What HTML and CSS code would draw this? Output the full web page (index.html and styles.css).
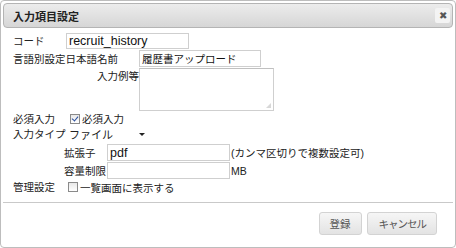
FILE: index.html
```html
<!DOCTYPE html>
<html lang="ja">
<head>
  <meta charset="UTF-8" />
  <title>入力項目設定</title>
  <link rel="stylesheet" href="styles.css">
</head>
<body>
  <div class="dialog">
    <div class="titlebar">
      <span class="title">入力項目設定</span>
      <span class="close">&#10006;</span>
    </div>
    <form class="content">
      <div class="row row-code">
        <label class="lbl lbl-code">コード</label>
        <div class="input input-code">recruit_history</div>
      </div>
      <div class="row row-name">
        <label class="lbl lbl-lang">言語別設定日本語名前</label>
        <div class="input input-name">履歴書アップロード</div>
      </div>
      <div class="row row-example">
        <label class="lbl lbl-example">入力例等</label>
        <div class="textarea"><span class="grip"></span></div>
      </div>
      <div class="row row-required">
        <label class="lbl lbl-main">必須入力</label>
        <span class="check checked"></span>
        <span class="check-text">必須入力</span>
      </div>
      <div class="row row-type">
        <label class="lbl lbl-main">入力タイプ</label>
        <div class="select">ファイル<span class="caret"></span></div>
      </div>
      <div class="row row-sub">
        <label class="lbl lbl-sub">拡張子</label>
        <div class="input input-sub">pdf</div>
        <span class="note">(カンマ区切りで複数設定可)</span>
      </div>
      <div class="row row-sub row-size">
        <label class="lbl lbl-sub">容量制限</label>
        <div class="input input-sub"></div>
        <span class="note">MB</span>
      </div>
      <div class="row row-admin">
        <label class="lbl lbl-main">管理設定</label>
        <span class="check"></span>
        <span class="check-text">一覧画面に表示する</span>
      </div>
    </form>
    <div class="buttonpane">
      <button type="button" class="btn">登録</button>
      <button type="button" class="btn btn-cancel">キャンセル</button>
    </div>
  </div>
</body>
</html>
```

FILE: styles.css
```css
body {
  margin: 0;
  background: #ffffff;
  font-family: "Liberation Sans", "Noto Sans CJK JP", sans-serif;
  font-size: 10.5px;
  color: #222;
}

.dialog {
  width: 456px;
  height: 248px;
  box-sizing: border-box;
  border: 1px solid #bdbdbd;
  border-radius: 4px;
  padding: 2px;
  display: flex;
  flex-direction: column;
  background: #fff;
}

.titlebar {
  height: 25px;
  box-sizing: border-box;
  border: 1px solid #b4b4b4;
  border-radius: 4px;
  background: linear-gradient(#ececec, #d6d6d6);
  display: flex;
  align-items: center;
  justify-content: space-between;
  padding: 0 2px 0 9px;
}

.title {
  font-weight: bold;
  font-size: 11px;
  color: #222;
}

.close {
  width: 15px;
  height: 15px;
  background: #f3f3f3;
  border-radius: 2px;
  color: #555;
  font-size: 10px;
  display: flex;
  align-items: center;
  justify-content: center;
}

.content {
  height: 174px;
  margin: 0;
  padding: 5px 0 0 10px;
  box-sizing: border-box;
}

.row {
  display: flex;
  align-items: center;
}

.lbl {
  line-height: 14px;
}

.input {
  box-sizing: border-box;
  border: 1px solid #cfcfcf;
  background: #fff;
  padding: 0 0 0 2px;
  display: flex;
  align-items: center;
}

.row-code {
  height: 16px;
}

.lbl-code {
  width: 53px;
}

.input-code {
  width: 123px;
  height: 16px;
  font-size: 12.5px;
  color: #111;
}

.row-name {
  height: 17px;
  margin-top: 1px;
}

.lbl-lang {
  width: 126px;
}

.input-name {
  width: 122px;
  height: 17px;
  color: #111;
}

.row-example {
  align-items: flex-start;
  margin-top: 1px;
}

.lbl-example {
  width: 126px;
  text-align: right;
  margin-top: 1px;
}

.textarea {
  position: relative;
  width: 135px;
  height: 43px;
  box-sizing: border-box;
  border: 1px solid #cfcfcf;
  border-top-color: #c0c0c0;
}

.grip {
  position: absolute;
  right: 2px;
  bottom: 2px;
  width: 5px;
  height: 5px;
  background: radial-gradient(circle, #aaa 0.6px, transparent 0.8px) 0 0 / 2px 2px;
  clip-path: polygon(100% 0, 100% 100%, 0 100%);
}

.row-required {
  height: 13px;
  margin-top: 1px;
}

.lbl-main {
  width: 57px;
}

.check {
  width: 8px;
  height: 8px;
  border: 1px solid #8a8a8a;
  background: linear-gradient(#e8e8e8, #fff);
  margin-right: 2px;
  position: relative;
}

.checked::after {
  content: "";
  position: absolute;
  left: 2px;
  top: 0;
  width: 3px;
  height: 5px;
  border: solid #2a4f9e;
  border-width: 0 1.5px 1.5px 0;
  transform: rotate(40deg);
}

.row-type {
  height: 16px;
  margin-top: 1px;
}

.select {
  width: 84px;
  height: 14px;
  box-sizing: border-box;
  padding-left: 2px;
  background: #fff;
  position: relative;
  display: flex;
  align-items: center;
  margin-left: -3px;
  font-size: 11px;
}

.caret {
  position: absolute;
  right: 6px;
  top: 6px;
  border-left: 3px solid transparent;
  border-right: 3px solid transparent;
  border-top: 3px solid #222;
}

.row-sub {
  height: 17px;
  margin-top: 2px;
  padding-left: 51px;
}

.row-size {
  margin-top: 1px;
}

.lbl-sub {
  width: 43px;
}

.input-sub {
  width: 123px;
  height: 17px;
  font-size: 12.5px;
  color: #111;
}

.note {
  margin-left: 1px;
}

.row-admin {
  height: 14px;
  margin-top: 1px;
}

.row-admin .check {
  margin-left: -2px;
}

.buttonpane {
  border-top: 1px solid #c9c9c9;
  flex: 1;
  display: flex;
  justify-content: flex-end;
  align-items: flex-start;
  padding: 9px 16px 0 0;
  gap: 5px;
}

.btn {
  height: 23px;
  box-sizing: border-box;
  border: 1px solid #d3d3d3;
  border-radius: 3px;
  background: linear-gradient(#f6f6f6, #e3e3e3);
  font-family: "Liberation Sans", "Noto Sans CJK JP", sans-serif;
  font-size: 10.5px;
  color: #555;
  padding: 0 10px;
  margin: 0;
}

.btn-cancel {
  letter-spacing: -1px;
  padding: 0 10px 0 11px;
}
```
